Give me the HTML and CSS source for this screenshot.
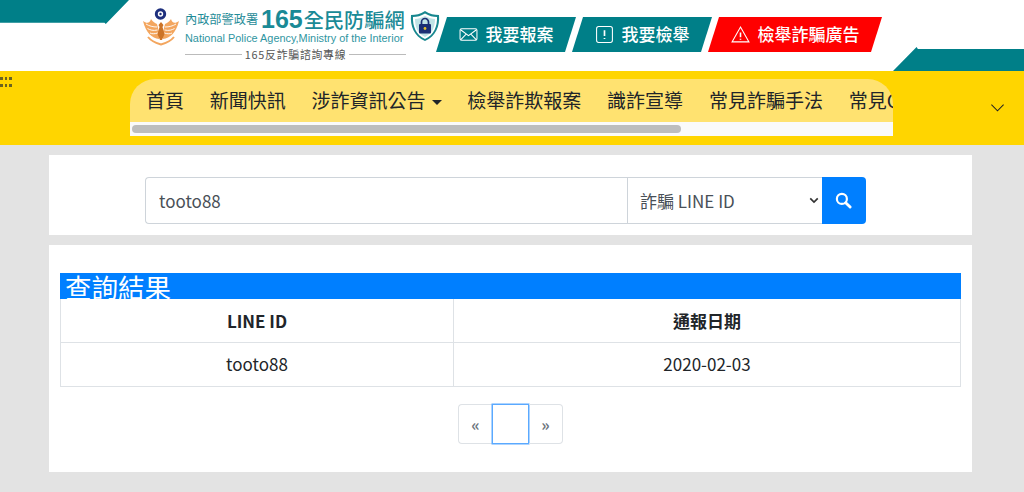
FILE: index.html
```html
<!DOCTYPE html>
<html lang="zh-Hant">
<head>
<meta charset="utf-8">
<title>165全民防騙網</title>
<link rel="stylesheet" href="styles.css">
</head>
<body>
<header class="top">
  <div class="corner-left"></div>
  <div class="corner-right"></div>
  <a class="logo">
    <svg class="emblem" viewBox="0 0 38 38">
      <path d="M17 31C10 30 4 25 1 13C5 16 8 15 9 11C11 14 13 15 15 16L17 24Z" fill="#f3a65f"/>
      <path d="M21 31C28 30 34 25 37 13C33 16 30 15 29 11C27 14 25 15 23 16L21 24Z" fill="#f3a65f"/>
      <g fill="none" stroke="#fff" stroke-width=".9">
        <path d="M15 19C11 19 7 18 4 16M15.500 22C11 23 8 22 5.500 20.500M16 25C12 26 10 26 8 25"/>
        <path d="M23 19C27 19 31 18 34 16M22.500 22C27 23 30 22 32.500 20.500M22 25C26 26 28 26 30 25"/>
      </g>
      <path d="M6 29C10 34 14 35 19 36.500C24 35 28 34 32 29" fill="none" stroke="#f3a65f" stroke-width="2"/>
      <path d="M19 14l2.500 3-1 2 2 7-2.500 6h-2l-2.500-6 2-7-1-2z" fill="#cc7428"/>
      <circle cx="18.500" cy="6" r="5.700" fill="#1d2f7d"/>
      <circle cx="18.500" cy="6" r="2.700" fill="#fff"/>
      <circle cx="18.500" cy="6" r="1.200" fill="#1d2f7d"/>
    </svg>
    <div class="logo-text">
      <div class="logo-main"><span class="agency">內政部警政署</span><span class="num">165</span><span class="brand">全民防騙網</span></div>
      <div class="logo-en">National Police Agency,Ministry of the Interior</div>
      <div class="logo-line"><span>165反詐騙諮詢專線</span></div>
    </div>
    <svg class="shield" viewBox="0 0 30 32">
      <path d="M15 1C20 4 24 5 29 5C30 16 26 26 15 31C4 26 0 16 1 5C6 5 10 4 15 1Z" fill="#17878f"/>
      <path d="M15 3.500C19 6 23 7 27 7C27.500 16 24 25 15 29C6 25 2.500 16 3 7C7 7 11 6 15 3.500Z" fill="#fff"/>
      <path d="M15 6C19 8 22 9 25 9C25 16 23 23 15 27C7 23 5 16 5 9C8 9 11 8 15 6Z" fill="#bfe3e6"/>
      <path d="M11.500 15v-3a3.500 3.500 0 0 1 7 0v3" fill="none" stroke="#1b2f74" stroke-width="1.700"/>
      <rect x="9" y="14" width="12" height="9.500" rx="1" fill="#1b2f74"/>
      <circle cx="15" cy="18.500" r="1.400" fill="#e6c02c"/>
    </svg>
  </a>
  <nav class="actions">
    <a class="action">
      <svg class="action-icon" viewBox="0 0 18 18"><rect x="1" y="3.500" width="16" height="11" rx="1.500"/><path d="M1.500 4.500L9 10l7.500-5.500M1.500 14l5.500-5.500M16.500 14L11 8.500"/></svg>
      <span>我要報案</span>
    </a>
    <a class="action">
      <svg class="action-icon" viewBox="0 0 18 18"><rect x="1.500" y="1.500" width="15" height="15" rx="2"/><path d="M9 5v5.500M9 12.300v1" stroke-width="1.600"/></svg>
      <span>我要檢舉</span>
    </a>
    <a class="action action-alert">
      <svg class="action-icon" viewBox="0 0 18 18"><path d="M9 2l8 14H1z"/><path d="M9 7v4.500M9 13v1" stroke-width="1.500"/></svg>
      <span>檢舉詐騙廣告</span>
    </a>
  </nav>
</header>

<div class="navbar">
  <div class="dots"><i></i><i></i><i></i><i></i><i></i><i></i></div>
  <div class="menu-wrap">
    <ul class="menu">
      <li>首頁</li>
      <li>新聞快訊</li>
      <li class="has-caret">涉詐資訊公告</li>
      <li>檢舉詐欺報案</li>
      <li>識詐宣導</li>
      <li>常見詐騙手法</li>
      <li>常見QA</li>
    </ul>
    <div class="scrollbar"><div class="thumb"></div></div>
  </div>
  <svg class="toggler" viewBox="0 0 16 10"><path d="M1.500 1.500L8 8l6.500-6.500"/></svg>
</div>

<main class="page">
  <section class="card search-card">
    <form class="search">
      <input class="search-input" type="text" value="tooto88">
      <div class="select-wrap">
        <select class="search-select"><option>詐騙 LINE ID</option></select>
        <svg class="chevron" viewBox="0 0 12 8"><path d="M1.500 1.500L6 6l4.500-4.500"/></svg>
      </div>
      <button class="search-btn" type="button" aria-label="搜尋">
        <svg viewBox="0 0 18 18"><circle cx="7.300" cy="7.300" r="5.300"/><path d="M11.300 11.300L16 16" stroke-width="3" stroke-linecap="round"/></svg>
      </button>
    </form>
  </section>

  <section class="card result-card">
    <h2 class="result-title">查詢結果</h2>
    <table class="result-table">
      <thead><tr><th class="col-id">LINE ID</th><th>通報日期</th></tr></thead>
      <tbody><tr><td>tooto88</td><td>2020-02-03</td></tr></tbody>
    </table>
    <div class="pager">
      <a class="pg pg-first">«</a>
      <a class="pg pg-current"></a>
      <a class="pg pg-last">»</a>
    </div>
  </section>
</main>
</body>
</html>
```

FILE: styles.css
```css
* { box-sizing: border-box; }
html, body { margin: 0; height: 492px; overflow: hidden; }
body {
  background: #e3e3e3;
  color: #212529;
  font-family: "Noto Sans CJK TC", "Noto Sans", sans-serif;
  font-size: 17px;
}

/* header */
.top {
  position: relative;
  height: 71px;
  background: #fff;
  display: flex;
  align-items: flex-start;
  padding: 7px 0 0 142px;
}
.corner-left {
  position: absolute;
  left: 0; top: 0;
  width: 129px; height: 24px;
  background: #007f88;
  clip-path: polygon(0 0, 100% 0, 82% 100%, 81% 95%, 0 95%);
}
.corner-right {
  position: absolute;
  right: 0; bottom: 0;
  width: 131px; height: 24px;
  background: #007f88;
  clip-path: polygon(18% 0, 19% 8%, 100% 8%, 100% 100%, 0 100%);
}
.logo { display: flex; align-items: flex-start; }
.emblem { width: 38px; height: 38px; margin-right: 5px; margin-top: 1px; }
.logo-text { width: 221px; }
.logo-main { display: flex; align-items: center; height: 24px; color: #1a8a96; white-space: nowrap; }
.agency { font-size: 12.200px; width: 76px; color: #1f8c98; }
.num { font-family: "Liberation Sans", sans-serif; font-size: 25px; font-weight: 700; line-height: 24px; margin-right: 1px; }
.brand { font-size: 20.200px; font-weight: 500; }
.logo-en { font-family: "Liberation Sans", sans-serif; font-size: 10.900px; line-height: 13px; margin-top: 1px; color: #2f95a1; white-space: nowrap; }
.logo-line {
  display: flex; align-items: center; gap: 3px;
  height: 14px; margin-top: 2px;
  font-size: 10.800px; color: #555; letter-spacing: .8px;
  white-space: nowrap;
}
.logo-line::before, .logo-line::after { content: ""; flex: 1; height: 1px; background: #bbb; }
.shield { width: 30px; height: 32px; margin: 3px 0 0 4px; }

.actions { display: flex; margin: 10px 0 0 -4px; }
.action {
  display: flex; align-items: center; justify-content: center; gap: 8px;
  width: 140px; height: 35px;
  margin-right: -4px;
  background: #007f88;
  color: #fff;
  font-size: 17px;
  font-weight: 500;
  line-height: 33px;
  clip-path: polygon(11px 0, 100% 0, calc(100% - 11px) 100%, 0 100%);
}
.action span { margin-top: -2px; }
.action-alert { width: 174px; background: #ff0000; }
.action-icon { width: 19px; height: 19px; fill: none; stroke: #fff; stroke-width: 1; }

/* navbar */
.navbar {
  position: relative;
  height: 74px;
  background: #ffd500;
  padding: 8px 0 0 130px;
}
.dots {
  position: absolute; left: 0; top: 6px;
  display: grid; grid-template-columns: repeat(3, 2.500px); gap: 4.500px 2px;
}
.dots i { width: 2.500px; height: 2.500px; background: #6b6420; }
.menu-wrap { width: 763px; }
.menu {
  display: flex;
  height: 43px;
  margin: 0;
  padding: 0 0 0 3px;
  list-style: none;
  background: #ffe270;
  border-radius: 25px 25px 0 0 / 25px 25px 0 0;
  overflow: hidden;
  white-space: nowrap;
}
.menu li { padding: 0 12.900px; font-size: 19px; line-height: 42px; flex: none; }
.has-caret::after {
  content: "";
  display: inline-block;
  margin-left: 6px;
  vertical-align: 3px;
  border-top: 5px solid #212529;
  border-left: 5px solid transparent;
  border-right: 5px solid transparent;
}
.scrollbar { height: 14px; background: #fafafa; padding: 3px 2px; }
.thumb { width: 549px; height: 8px; border-radius: 4px; background: #bdbdbd; }
.toggler {
  position: absolute; left: 990px; top: 32px;
  width: 15px; height: 10px;
  fill: none; stroke: #222; stroke-width: 1.100;
}

/* page */
.page { padding: 10px 52px 0 49px; }
.card { background: #fff; }
.search-card { height: 80px; padding: 22px 0 0 96px; }
.search { display: flex; width: 721px; height: 47px; }
.search-input {
  width: 482px; height: 47px;
  padding: 0 13px 1px;
  border: 1px solid #ced4da;
  border-right: 0;
  border-radius: 4px 0 0 4px;
  font: inherit;
  color: #495057;
  outline: 0;
}
.select-wrap { position: relative; width: 195px; }
.search-select {
  appearance: none;
  width: 100%; height: 47px;
  padding: 0 12px 1px;
  background: #fff;
  border: 1px solid #ced4da;
  border-right: 0;
  border-radius: 0;
  font: inherit;
  color: #495057;
  outline: 0;
}
.chevron {
  position: absolute; right: 3px; top: 20px;
  width: 10px; height: 7px;
  fill: none; stroke: #333; stroke-width: 2;
}
.search-btn {
  width: 44px; height: 47px;
  padding: 0 1px 1px 0;
  display: flex; align-items: center; justify-content: center;
  border: 0;
  border-radius: 0 4px 4px 0;
  background: #007fff;
}
.search-btn svg { width: 17px; height: 17px; fill: none; stroke: #fff; stroke-width: 2.300; }

.result-card { height: 227px; margin-top: 10px; padding: 28px 11px 0; }
.result-title {
  height: 26px;
  width: 901px;
  margin: 0;
  padding-left: 5px;
  background: #007fff;
  color: #fff;
  font-size: 26.500px;
  font-weight: 400;
  line-height: 27px;
  white-space: nowrap;
}
.result-table {
  width: 901px;
  border-collapse: collapse;
  table-layout: fixed;
}
.result-table th, .result-table td {
  border: 1px solid #dee2e6;
  text-align: center;
  vertical-align: middle;
  padding: 0 0 1px;
  height: 43.500px;
}
.result-table th { font-weight: 700; }
.result-table thead th { border-top: 0; }
.col-id { width: 393px; }

.pager { display: flex; justify-content: center; margin-top: 17px; }
.pg {
  display: flex; align-items: center; justify-content: center;
  width: 34px; height: 40px;
  border: 1px solid #dee2e6;
  color: #6c757d;
  font-size: 16px;
  font-weight: 700;
}
.pg-first { border-right: 0; border-radius: 4px 0 0 4px; }
.pg-last { border-left: 0; border-radius: 0 4px 4px 0; }
.pg-current { width: 37px; border: 1px solid #5aa9ff; box-shadow: 0 0 0 .5px #5aa9ff; }
```
